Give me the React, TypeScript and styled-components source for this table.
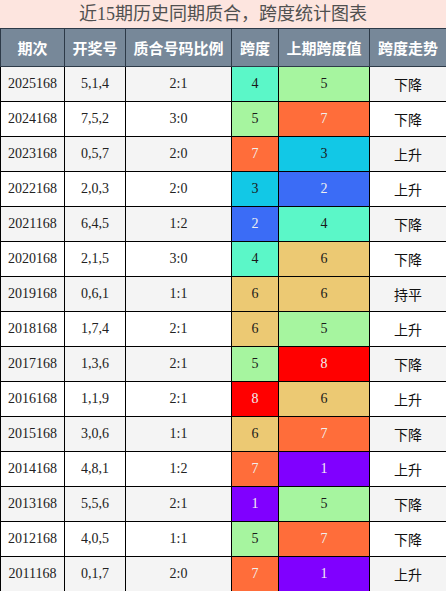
import React from "react";
import styled, { createGlobalStyle } from "styled-components";

const Global = createGlobalStyle`
  html, body { margin: 0; padding: 0; background: #fff; }
  body { font-family: "Liberation Serif", "Noto Sans CJK SC", serif; }
`;

const Wrap = styled.div`
  width: 446px;
`;

const Title = styled.div`
  height: 28px;
  line-height: 28px;
  background: #fde5df;
  color: #505050;
  font-size: 18px;
  text-align: center;
  font-family: "Liberation Serif", "Noto Sans CJK SC", serif;
  box-sizing: border-box;
`;

const Table = styled.table`
  width: 446px;
  border-collapse: collapse;
  table-layout: fixed;
  font-family: "Liberation Serif", "Noto Sans CJK SC", serif;
`;

const Th = styled.th`
  background: #778899;
  color: #fff;
  font-weight: bold;
  font-size: 15px;
  height: 37px;
  padding: 0;
  border: 1px solid #2d3a48;
  font-family: "Liberation Serif", "Noto Sans CJK SC", serif;
`;

const Tr = styled.tr<{ $alt: boolean }>`
  background: ${(p) => (p.$alt ? "#f4f4f4" : "#ffffff")};
`;

const Td = styled.td`
  height: 34px;
  padding: 0;
  border: 1px solid #000;
  text-align: center;
  font-size: 14px;
  color: #222;
`;

const SpanCell = styled(Td)<{ $v: number }>`
  background: ${(p) => SPAN_COLORS[p.$v].bg};
  color: ${(p) => SPAN_COLORS[p.$v].fg};
`;

const Trend = styled(Td)`
  font-family: "Noto Sans CJK SC", sans-serif;
  color: #111;
`;

const SPAN_COLORS: Record<number, { bg: string; fg: string }> = {
  0: { bg: "#cccccc", fg: "#222" },
  1: { bg: "#8000ff", fg: "#f0f0f0" },
  2: { bg: "#3b6cf6", fg: "#f0f0f0" },
  3: { bg: "#12c8e6", fg: "#1a1a1a" },
  4: { bg: "#5bf7c8", fg: "#1a1a1a" },
  5: { bg: "#a6f59f", fg: "#1a1a1a" },
  6: { bg: "#ecc973", fg: "#1a1a1a" },
  7: { bg: "#ff6d3a", fg: "#f0f0f0" },
  8: { bg: "#ff0000", fg: "#f0f0f0" },
  9: { bg: "#999999", fg: "#fff" },
};

const rows: [string, string, string, number, number, string][] = [
  ["2025168", "5,1,4", "2:1", 4, 5, "下降"],
  ["2024168", "7,5,2", "3:0", 5, 7, "下降"],
  ["2023168", "0,5,7", "2:0", 7, 3, "上升"],
  ["2022168", "2,0,3", "2:0", 3, 2, "上升"],
  ["2021168", "6,4,5", "1:2", 2, 4, "下降"],
  ["2020168", "2,1,5", "3:0", 4, 6, "下降"],
  ["2019168", "0,6,1", "1:1", 6, 6, "持平"],
  ["2018168", "1,7,4", "2:1", 6, 5, "上升"],
  ["2017168", "1,3,6", "2:1", 5, 8, "下降"],
  ["2016168", "1,1,9", "2:1", 8, 6, "上升"],
  ["2015168", "3,0,6", "1:1", 6, 7, "下降"],
  ["2014168", "4,8,1", "1:2", 7, 1, "上升"],
  ["2013168", "5,5,6", "2:1", 1, 5, "下降"],
  ["2012168", "4,0,5", "1:1", 5, 7, "下降"],
  ["2011168", "0,1,7", "2:0", 7, 1, "上升"],
];

const widths = [64, 61, 106, 47, 91, 77];
const heads = ["期次", "开奖号", "质合号码比例", "跨度", "上期跨度值", "跨度走势"];

export default function App() {
  return (
    <Wrap>
      <Global />
      <Title>近15期历史同期质合，跨度统计图表</Title>
      <Table>
        <colgroup>
          {widths.map((w, i) => (
            <col key={i} style={{ width: w }} />
          ))}
        </colgroup>
        <thead>
          <tr>
            {heads.map((h) => (
              <Th key={h}>{h}</Th>
            ))}
          </tr>
        </thead>
        <tbody>
          {rows.map((r, i) => (
            <Tr key={r[0]} $alt={i % 2 === 0}>
              <Td>{r[0]}</Td>
              <Td>{r[1]}</Td>
              <Td>{r[2]}</Td>
              <SpanCell $v={r[3]}>{r[3]}</SpanCell>
              <SpanCell $v={r[4]}>{r[4]}</SpanCell>
              <Trend>{r[5]}</Trend>
            </Tr>
          ))}
        </tbody>
      </Table>
    </Wrap>
  );
}
